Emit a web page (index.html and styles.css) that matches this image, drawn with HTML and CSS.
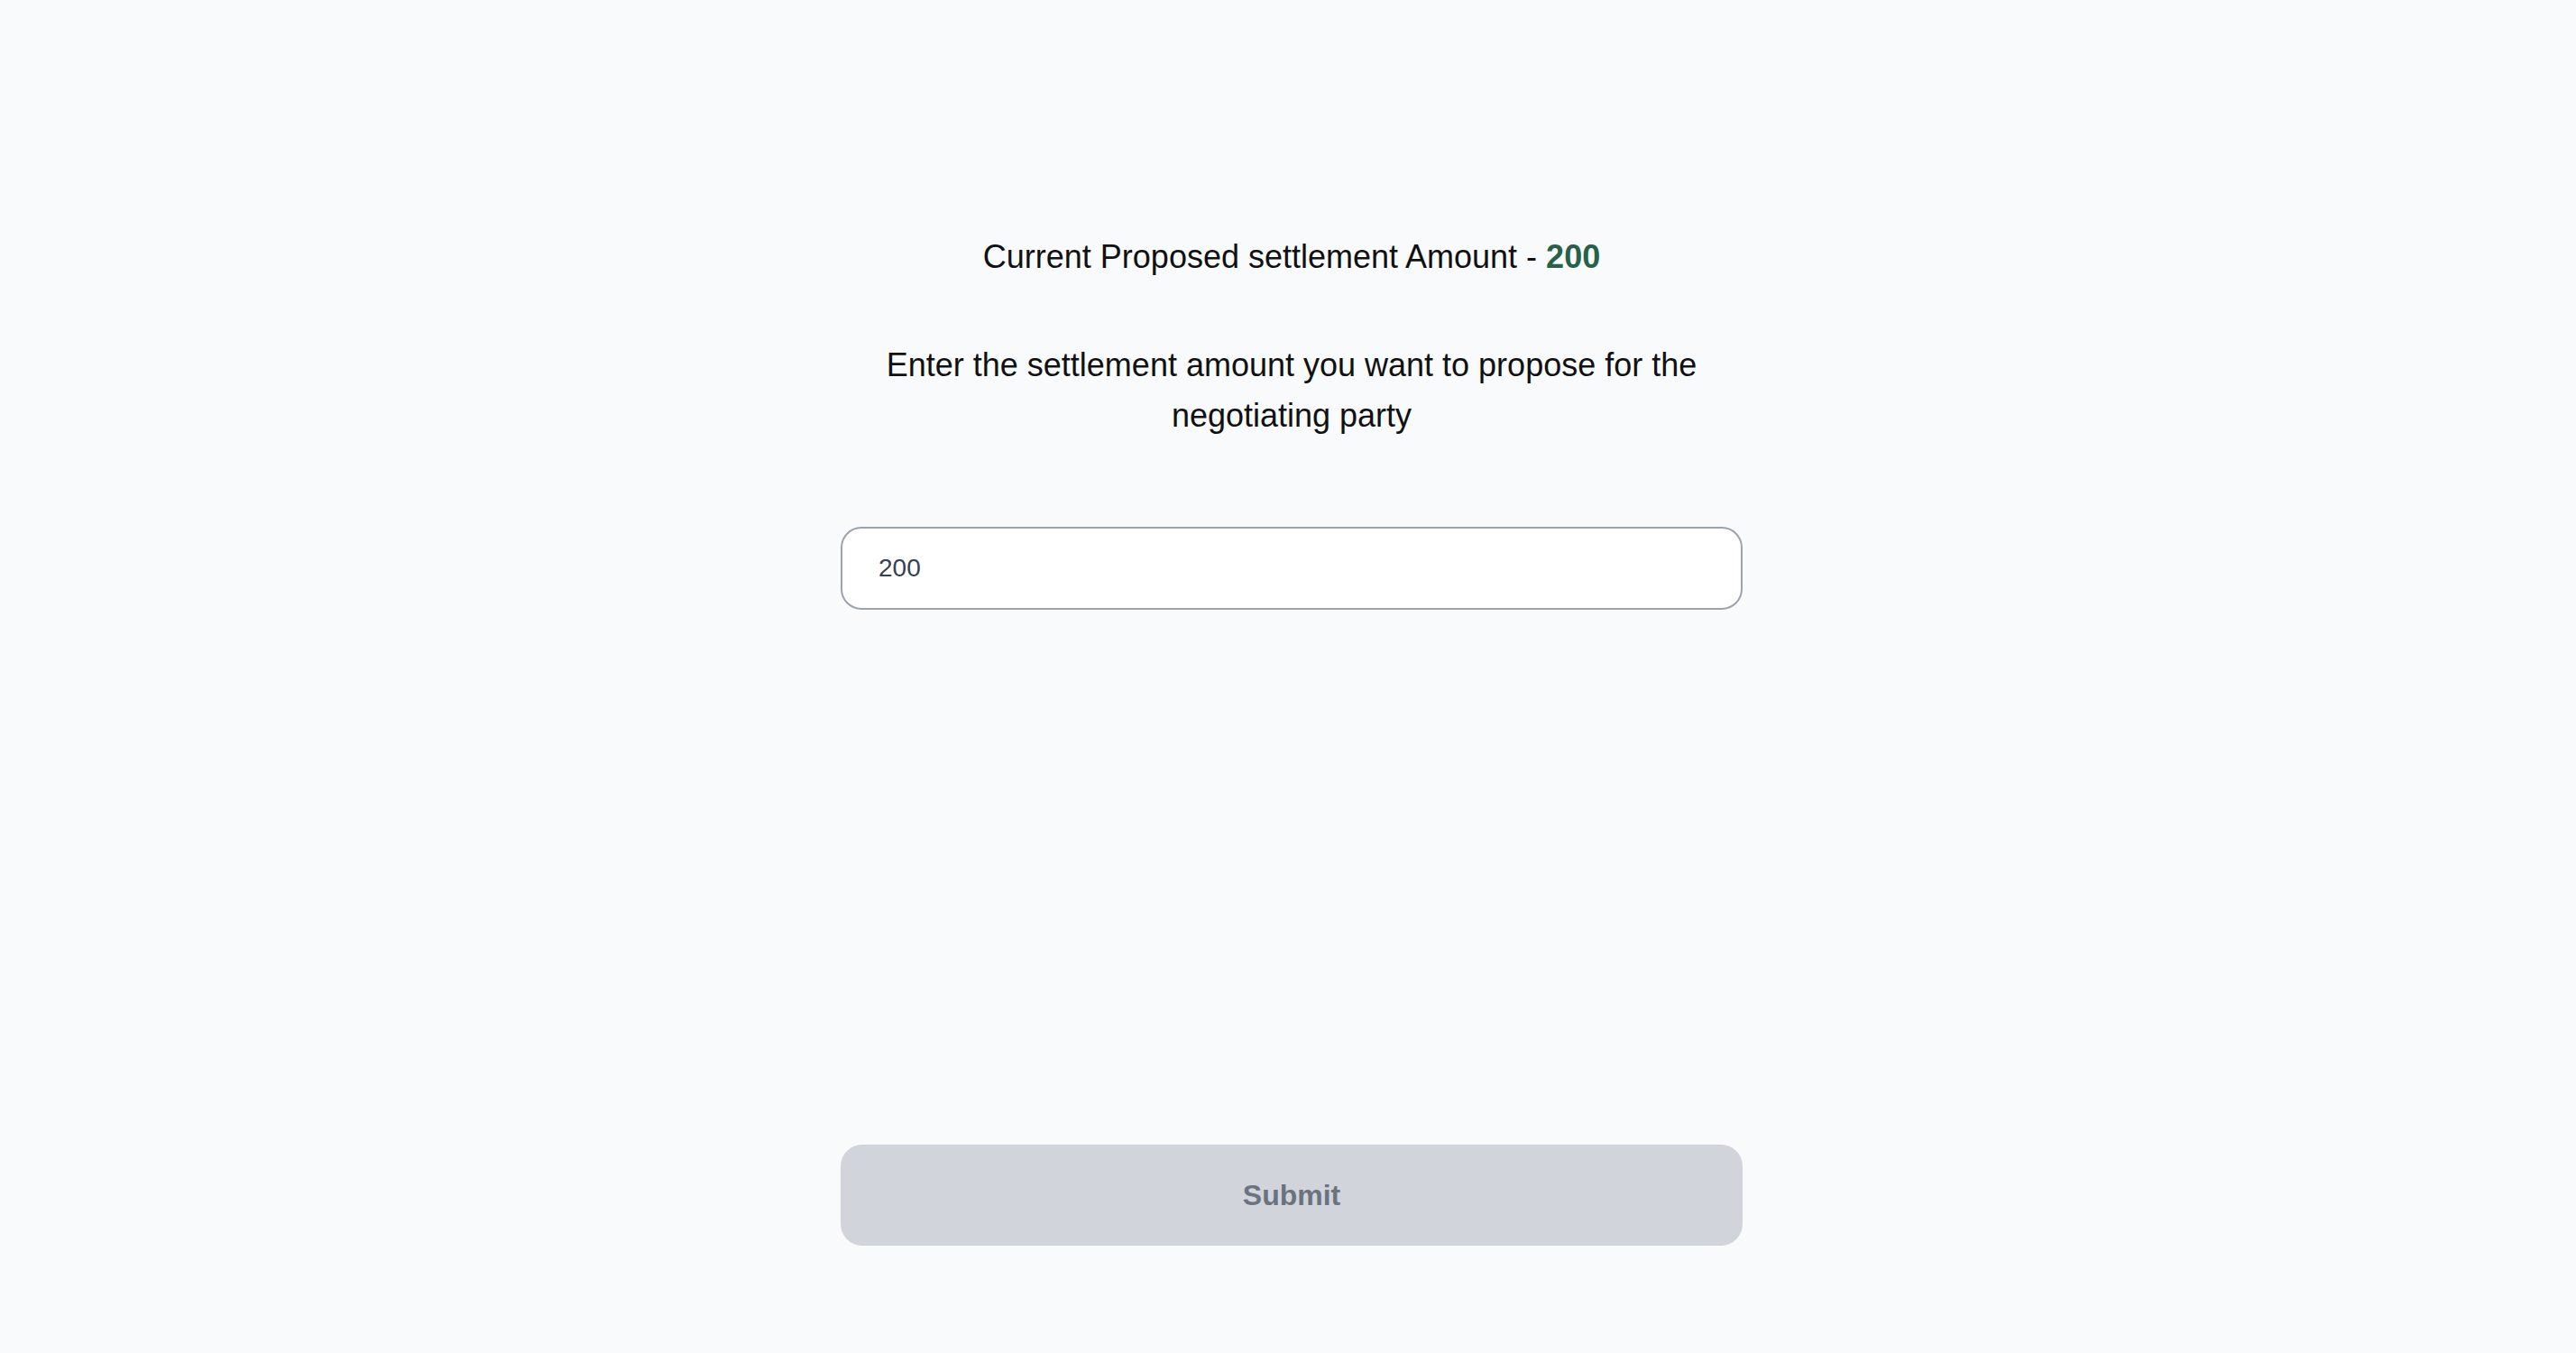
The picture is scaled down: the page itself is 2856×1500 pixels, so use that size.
FILE: index.html
```html
<!DOCTYPE html>
<html lang="en">
<head>
<meta charset="utf-8">
<title>Propose settlement</title>
<link rel="stylesheet" href="styles.css">
</head>
<body>
<main class="page">
  <section class="form">
    <h1 class="current">Current Proposed settlement Amount - <span class="amount">200</span></h1>
    <p class="prompt">Enter the settlement amount you want to propose for the negotiating party</p>
    <input class="amount-input" type="text" value="200">
    <button class="submit" type="button" disabled>Submit</button>
  </section>
</main>
</body>
</html>
```

FILE: styles.css
```css
* {
  box-sizing: border-box;
}

html, body {
  margin: 0;
  padding: 0;
}

body {
  background: #f9fafb;
  font-family: "Liberation Sans", Arial, Helvetica, sans-serif;
  color: #111111;
}

.page {
  display: flex;
  justify-content: center;
  padding-top: 257px;
  padding-left: 8px;
}

.form {
  width: 1000px;
  display: flex;
  flex-direction: column;
  align-items: stretch;
}

.current {
  margin: 0;
  font-size: 36px;
  line-height: 56px;
  font-weight: 400;
  text-align: center;
  color: #111111;
}

.amount {
  font-weight: 700;
  color: #28614a;
}

.prompt {
  margin: 64px 0 0;
  font-size: 36px;
  line-height: 56px;
  text-align: center;
  color: #111111;
}

.amount-input {
  margin-top: 95px;
  height: 92px;
  width: 100%;
  padding: 0 40px;
  border: 2px solid #9ca3af;
  border-radius: 23px;
  background: #ffffff;
  font-family: "Liberation Sans", Arial, Helvetica, sans-serif;
  font-size: 28px;
  color: #374151;
  outline: none;
}

.submit {
  margin-top: 593px;
  height: 112px;
  width: 100%;
  border: none;
  border-radius: 24px;
  background: #d1d5db;
  font-family: "Liberation Sans", Arial, Helvetica, sans-serif;
  font-size: 32px;
  font-weight: 700;
  color: #6b7280;
}
```
